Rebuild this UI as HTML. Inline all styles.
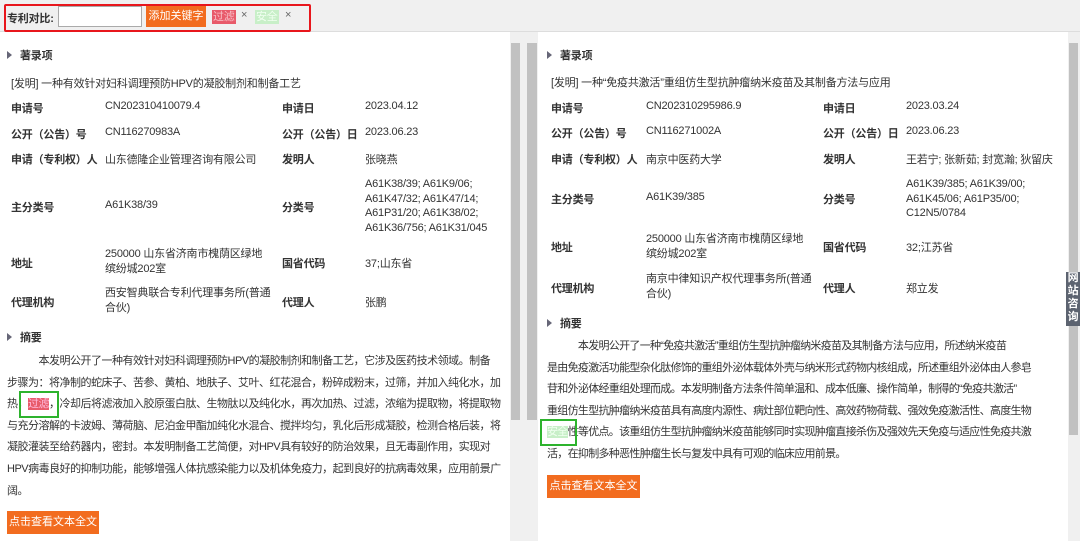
<!DOCTYPE html>
<html><head><meta charset="utf-8"><style>
*{margin:0;padding:0;box-sizing:border-box}
body{width:1080px;height:541px;overflow:hidden;background:#f0f0f0;font-family:"Liberation Sans","Noto Sans CJK SC",sans-serif;font-size:11px;letter-spacing:-0.2px;color:#333;position:relative}
.a{position:absolute;white-space:nowrap}
.b{font-weight:bold;color:#333}
.sb{position:absolute;background:#c1c1c1}
.hdr{font-weight:bold;font-size:11px}
.tri{display:inline-block;width:0;height:0;border-left:5px solid #667;border-top:4px solid transparent;border-bottom:4px solid transparent;margin-right:8px;vertical-align:0}
.p{position:absolute;line-height:21.6px;font-size:11px;letter-spacing:-0.5px;white-space:nowrap}
.btn{position:absolute;background:#f26c1f;color:#fff;font-size:11px;text-align:center;letter-spacing:0}
</style></head><body>
<div class="a" style="left:0;top:0;width:1080px;height:32px;background:#f0f0f0;border-bottom:1px solid #ddd"></div>
<div class="a" style="left:4px;top:4px;width:307px;height:28px;border:2px solid #e8161c;border-radius:2px"></div>
<div class="a b" style="left:7px;top:10px">专利对比:</div>
<div class="a" style="left:58px;top:6px;width:84px;height:21px;background:#fff;border:1px solid #aaa"></div>
<div class="btn" style="left:146px;top:6px;width:60px;height:21px;line-height:21px">添加关键字</div>
<div class="a" style="left:212px;top:10px;background:#e85a6a;color:#f8c0c8;padding:0 1px;line-height:14px">过滤</div>
<div class="a" style="left:241px;top:9px;color:#666;font-size:11px">×</div>
<div class="a" style="left:255px;top:10px;background:#c8efc8;color:#f0fff0;padding:0 1px;line-height:14px">安全</div>
<div class="a" style="left:285px;top:9px;color:#666;font-size:11px">×</div>

<div class="a" style="left:0;top:32px;width:510px;height:509px;background:#fff"></div>
<div class="a" style="left:510px;top:32px;width:11px;height:509px;background:#f0f0f0"></div>
<div class="sb" style="left:511px;top:43px;width:9px;height:377px"></div>
<div class="sb" style="left:527px;top:43px;width:10px;height:377px"></div>
<div class="a" style="left:538px;top:32px;width:530px;height:509px;background:#fff"></div>
<div class="a" style="left:1068px;top:32px;width:12px;height:509px;background:#f0f0f0"></div>
<div class="sb" style="left:1069px;top:43px;width:9px;height:392px"></div>
<div class="a" style="left:1066px;top:272px;width:14px;height:54px;background:#5c6370;color:#fff;font-size:11px;line-height:13px;white-space:normal;text-align:center;font-weight:bold">网站咨询</div>

<div class="a hdr" style="left:7px;top:47px"><span class="tri"></span>著录项</div>
<div class="a" style="left:11px;top:75px">[发明] 一种有效针对妇科调理预防HPV的凝胶制剂和制备工艺</div>
<div class="a b" style="left:11px;top:100px">申请号</div><div class="a" style="left:105px;top:100px">CN202310410079.4</div>
<div class="a b" style="left:282px;top:100px">申请日</div><div class="a" style="left:365px;top:100px">2023.04.12</div>
<div class="a b" style="left:11px;top:126px">公开（公告）号</div><div class="a" style="left:105px;top:126px">CN116270983A</div>
<div class="a b" style="left:282px;top:126px">公开（公告）日</div><div class="a" style="left:365px;top:126px">2023.06.23</div>
<div class="a b" style="left:11px;top:151px">申请（专利权）人</div><div class="a" style="left:105px;top:151px">山东德隆企业管理咨询有限公司</div>
<div class="a b" style="left:282px;top:151px">发明人</div><div class="a" style="left:365px;top:151px">张晓燕</div>
<div class="a b" style="left:11px;top:199px">主分类号</div><div class="a" style="left:105px;top:199px">A61K38/39</div>
<div class="a b" style="left:282px;top:199px">分类号</div>
<div class="a" style="left:365px;top:177px;line-height:14.5px">A61K38/39; A61K9/06;<br>A61K47/32; A61K47/14;<br>A61P31/20; A61K38/02;<br>A61K36/756; A61K31/045</div>
<div class="a b" style="left:11px;top:255px">地址</div>
<div class="a" style="left:105px;top:247px;line-height:15px">250000 山东省济南市槐荫区绿地<br>缤纷城202室</div>
<div class="a b" style="left:282px;top:255px">国省代码</div><div class="a" style="left:365px;top:255px">37;山东省</div>
<div class="a b" style="left:11px;top:294px">代理机构</div>
<div class="a" style="left:105px;top:286px;line-height:15px">西安智典联合专利代理事务所(普通<br>合伙)</div>
<div class="a b" style="left:282px;top:294px">代理人</div><div class="a" style="left:365px;top:294px">张鹏</div>
<div class="a hdr" style="left:7px;top:329px"><span class="tri"></span>摘要</div>
<div class="p" style="left:7px;top:351px">　　　本发明公开了一种有效针对妇科调理预防HPV的凝胶制剂和制备工艺，它涉及医药技术领域。制备<br>步骤为：将净制的蛇床子、苦参、黄柏、地肤子、艾叶、红花混合，粉碎成粉末，过筛，并加入纯化水，加<br>热，<span style="background:#e85a6a;color:#fbd">过滤</span>，冷却后将滤液加入胶原蛋白肽、生物肽以及纯化水，再次加热、过滤，浓缩为提取物，将提取物<br>与充分溶解的卡波姆、薄荷脑、尼泊金甲酯加纯化水混合、搅拌均匀，乳化后形成凝胶，检测合格后装，将<br>凝胶灌装至给药器内，密封。本发明制备工艺简便，对HPV具有较好的防治效果，且无毒副作用，实现对<br>HPV病毒良好的抑制功能，能够增强人体抗感染能力以及机体免疫力，起到良好的抗病毒效果，应用前景广<br>阔。</div>
<div class="a" style="left:19px;top:391px;width:40px;height:27px;border:2px solid #2db32d"></div>
<div class="btn" style="left:7px;top:511px;width:92px;height:23px;line-height:23px">点击查看文本全文</div>

<div class="a hdr" style="left:547px;top:47px"><span class="tri"></span>著录项</div>
<div class="a" style="left:551px;top:74px">[发明] 一种“免疫共激活”重组仿生型抗肿瘤纳米疫苗及其制备方法与应用</div>
<div class="a b" style="left:551px;top:100px">申请号</div><div class="a" style="left:646px;top:100px">CN202310295986.9</div>
<div class="a b" style="left:823px;top:100px">申请日</div><div class="a" style="left:906px;top:100px">2023.03.24</div>
<div class="a b" style="left:551px;top:125px">公开（公告）号</div><div class="a" style="left:646px;top:125px">CN116271002A</div>
<div class="a b" style="left:823px;top:125px">公开（公告）日</div><div class="a" style="left:906px;top:125px">2023.06.23</div>
<div class="a b" style="left:551px;top:151px">申请（专利权）人</div><div class="a" style="left:646px;top:151px">南京中医药大学</div>
<div class="a b" style="left:823px;top:151px">发明人</div><div class="a" style="left:906px;top:151px">王若宁; 张新茹; 封宽瀚; 狄留庆</div>
<div class="a b" style="left:551px;top:191px">主分类号</div><div class="a" style="left:646px;top:191px">A61K39/385</div>
<div class="a b" style="left:823px;top:191px">分类号</div>
<div class="a" style="left:906px;top:177px;line-height:14.5px">A61K39/385; A61K39/00;<br>A61K45/06; A61P35/00;<br>C12N5/0784</div>
<div class="a b" style="left:551px;top:239px">地址</div>
<div class="a" style="left:646px;top:232px;line-height:14.5px">250000 山东省济南市槐荫区绿地<br>缤纷城202室</div>
<div class="a b" style="left:823px;top:239px">国省代码</div><div class="a" style="left:906px;top:239px">32;江苏省</div>
<div class="a b" style="left:551px;top:280px">代理机构</div>
<div class="a" style="left:646px;top:272px;line-height:15px">南京中律知识产权代理事务所(普通<br>合伙)</div>
<div class="a b" style="left:823px;top:280px">代理人</div><div class="a" style="left:906px;top:280px">郑立发</div>
<div class="a hdr" style="left:547px;top:315px"><span class="tri"></span>摘要</div>
<div class="p" style="left:547px;top:336px;letter-spacing:-0.7px">　　　本发明公开了一种“免疫共激活”重组仿生型抗肿瘤纳米疫苗及其制备方法与应用，所述纳米疫苗<br>是由免疫激活功能型杂化肽修饰的重组外泌体载体外壳与纳米形式药物内核组成，所述重组外泌体由人参皂<br>苷和外泌体经重组处理而成。本发明制备方法条件简单温和、成本低廉、操作简单，制得的“免疫共激活”<br>重组仿生型抗肿瘤纳米疫苗具有高度内源性、病灶部位靶向性、高效药物荷载、强效免疫激活性、高度生物<br><span style="background:#c8efc8;color:#f0fff0">安全</span>性等优点。该重组仿生型抗肿瘤纳米疫苗能够同时实现肿瘤直接杀伤及强效先天免疫与适应性免疫共激<br>活，在抑制多种恶性肿瘤生长与复发中具有可观的临床应用前景。</div>
<div class="a" style="left:540px;top:419px;width:37px;height:27px;border:2px solid #2db32d"></div>
<div class="btn" style="left:547px;top:475px;width:93px;height:23px;line-height:23px">点击查看文本全文</div>
</body></html>
